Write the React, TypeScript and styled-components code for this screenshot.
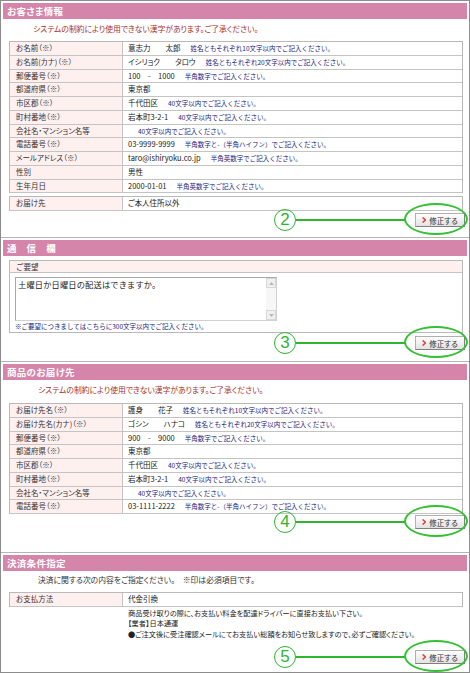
import React from 'react';
import styled, { createGlobalStyle } from 'styled-components';

const GlobalStyle = createGlobalStyle`
  html, body { margin:0; padding:0; background:#fff; }
  body {
    font-family: "Noto Sans CJK JP", "Noto Sans", sans-serif;
    color:#222;
  }
  * { box-sizing: border-box; }
`;

const Frame = styled.div`
  width:470px;
  height:673px;
  border:1px solid #8c8c8c;
  background:#fff;
  overflow:hidden;
`;

const Section = styled.section<{ h: number }>`
  height:${(p) => p.h}px;
  padding:2px 2px 0;
  border-bottom:1px solid #b4b4b4;
  &:last-child { border-bottom:none; }
`;

const Header = styled.div`
  height:16px;
  background:#d585a9;
  color:#fff;
  font-weight:bold;
  font-size:9.5px;
  line-height:16px;
  padding-left:4px;
  font-feature-settings:"palt";
  letter-spacing:0.3px;
`;

const Body = styled.div`
  padding:0 4px 0 6px;
`;

const Notice = styled.div<{ h: number; indent: number; red?: boolean }>`
  height:${(p) => p.h}px;
  line-height:${(p) => p.h - 3}px;
  padding-left:${(p) => p.indent}px;
  font-size:7.8px;
  color:${(p) => (p.red ? '#a8322e' : '#333')};
  font-feature-settings:"palt";
  white-space:nowrap;
`;

const Table = styled.div<{ mt?: number }>`
  border:1px solid #b9b9b9;
  border-bottom:none;
  margin-top:${(p) => p.mt || 0}px;
`;

const Row = styled.div`
  display:grid;
  grid-template-columns:113px 1fr;
  height:13.75px;
  border-bottom:1px solid #c4c4c4;
`;

const Label = styled.div`
  background:#fff0f0;
  border-right:1px solid #c4c4c4;
  padding-left:6px;
  font-size:7.5px;
  line-height:12.75px;
  color:#333;
  white-space:nowrap;
  font-feature-settings:"palt";
`;

const Value = styled.div`
  padding-left:5px;
  font-size:7.5px;
  line-height:12.75px;
  color:#222;
  white-space:nowrap;
  display:flex;
  align-items:center;
  font-feature-settings:"palt";
`;

const Note = styled.span`
  color:#23237d;
  font-size:6.5px;
  margin-left:10px;
  font-feature-settings:normal;
`;

const RequestBox = styled.div`
  margin-top:4px;
  border:1px solid #b9b9b9;
  padding-bottom:1px;
`;

const BoxLabel = styled.div`
  height:12px;
  background:#fff0f0;
  border-bottom:1px solid #c4c4c4;
  padding-left:6px;
  font-size:7.5px;
  line-height:11px;
  color:#333;
`;

const TextArea = styled.div`
  margin:4px 0 0 5px;
  width:262px;
  height:44px;
  border:1px solid #a9a9a9;
  border-right-color:#d0d0d0;
  border-bottom-color:#d0d0d0;
  display:flex;
`;

const TextContent = styled.div`
  flex:1;
  padding:1px 2px;
  font-size:8.2px;
  line-height:11px;
  color:#222;
  letter-spacing:0.2px;
`;

const ScrollBar = styled.div`
  width:10px;
  background:#f7f7f7;
  display:flex;
  flex-direction:column;
  justify-content:space-between;
`;

const ScrollBtn = styled.div`
  height:10px;
  border:1px solid #d8d8d8;
  background:#f0f0f0;
  display:flex;
  align-items:center;
  justify-content:center;
`;

const SmallNote = styled.div`
  padding-left:5px;
  height:10px;
  line-height:10px;
  font-size:6.5px;
  color:#23237d;
`;

const PayLines = styled.div`
  padding:1px 0 0 119px;
  font-size:7.2px;
  line-height:10.5px;
  color:#222;
  white-space:nowrap;
  font-feature-settings:"palt";
`;

const ActionRow = styled.div<{ mt: number }>`
  margin-top:${(p) => p.mt}px;
  height:16px;
  padding-right:2px;
  display:flex;
  justify-content:flex-end;
  align-items:center;
`;

const CircleNum = styled.span`
  width:22px;
  height:22px;
  flex:none;
  border:1.5px solid #2fb52f;
  border-radius:50%;
  color:#2fb52f;
  font-family:"Liberation Sans", Arial, sans-serif;
  font-size:17px;
  line-height:19px;
  text-align:center;
`;

const Connector = styled.span`
  width:109px;
  height:2px;
  background:#2fb52f;
`;

const ButtonWrap = styled.div`
  position:relative;
  margin-left:10px;
`;

const Ellipse = styled.span`
  position:absolute;
  left:-11px;
  right:-3px;
  top:-10px;
  bottom:-8px;
  border:2px solid #33c033;
  border-radius:50%;
  pointer-events:none;
`;

const EditButton = styled.div`
  width:50px;
  height:14px;
  border:1px solid #b0b0b0;
  border-right-color:#808080;
  border-bottom-color:#808080;
  background:linear-gradient(#fefefe, #e2e2e2);
  display:flex;
  align-items:center;
  justify-content:center;
  gap:3px;
  font-size:7.5px;
  color:#333;
  font-feature-settings:"palt";
`;

type Field = { label: string; value?: string; note?: string };

const customer: Field[] = [
  { label: 'お名前（※）', value: '意志力　　太郎', note: '姓名ともそれぞれ10文字以内でご記入ください。' },
  { label: 'お名前(カナ)（※）', value: 'イシリョク　　タロウ', note: '姓名ともそれぞれ20文字以内でご記入ください。' },
  { label: '郵便番号（※）', value: '100　-　1000', note: '半角数字でご記入ください。' },
  { label: '都道府県（※）', value: '東京都' },
  { label: '市区郡（※）', value: '千代田区', note: '40文字以内でご記入ください。' },
  { label: '町村番地（※）', value: '岩本町3-2-1', note: '40文字以内でご記入ください。' },
  { label: '会社名・マンション名等', note: '40文字以内でご記入ください。' },
  { label: '電話番号（※）', value: '03-9999-9999', note: '半角数字と-（半角ハイフン）でご記入ください。' },
  { label: 'メールアドレス（※）', value: 'taro@ishiryoku.co.jp', note: '半角英数字でご記入ください。' },
  { label: '性別', value: '男性' },
  { label: '生年月日', value: '2000-01-01', note: '半角英数字でご記入ください。' },
];

const delivery: Field[] = [
  { label: 'お届け先名（※）', value: '護身　　花子', note: '姓名ともそれぞれ10文字以内でご記入ください。' },
  { label: 'お届け先名(カナ)（※）', value: 'ゴシン　　ハナコ', note: '姓名ともそれぞれ20文字以内でご記入ください。' },
  { label: '郵便番号（※）', value: '900　-　9000', note: '半角数字でご記入ください。' },
  { label: '都道府県（※）', value: '東京都' },
  { label: '市区郡（※）', value: '千代田区', note: '40文字以内でご記入ください。' },
  { label: '町村番地（※）', value: '岩本町3-2-1', note: '40文字以内でご記入ください。' },
  { label: '会社名・マンション名等', note: '40文字以内でご記入ください。' },
  { label: '電話番号（※）', value: '03-1111-2222', note: '半角数字と-（半角ハイフン）でご記入ください。' },
];

function Fields({ rows, mt }: { rows: Field[]; mt?: number }) {
  return (
    <Table mt={mt}>
      {rows.map((r) => (
        <Row key={r.label}>
          <Label>{r.label}</Label>
          <Value>
            {r.value}
            {r.note && <Note>{r.note}</Note>}
          </Value>
        </Row>
      ))}
    </Table>
  );
}

function Action({ num, mt }: { num: string; mt: number }) {
  return (
    <ActionRow mt={mt}>
      <CircleNum>{num}</CircleNum>
      <Connector />
      <ButtonWrap>
        <EditButton>
          <svg width="4" height="6" viewBox="0 0 4 6">
            <path d="M0.6 0.4 L3.4 3 L0.6 5.6" fill="none" stroke="#e0403a" strokeWidth="1.4" />
          </svg>
          修正する
        </EditButton>
        <Ellipse />
      </ButtonWrap>
    </ActionRow>
  );
}

function Arrow({ up }: { up?: boolean }) {
  return (
    <svg width="5" height="3" viewBox="0 0 5 3">
      <path d={up ? 'M0 3 L2.5 0 L5 3 Z' : 'M0 0 L2.5 3 L5 0 Z'} fill="#b8b8b8" />
    </svg>
  );
}

export default function App() {
  return (
    <>
      <GlobalStyle />
      <Frame>
        <Section h={237}>
          <Header>お客さま情報</Header>
          <Body>
            <Notice h={22} indent={24} red>
              システムの制約により使用できない漢字があります。ご了承ください。
            </Notice>
            <Fields rows={customer} />
            <Fields rows={[{ label: 'お届け先', value: 'ご本人住所以外' }]} mt={3} />
          </Body>
          <Action num="2" mt={1} />
        </Section>

        <Section h={124}>
          <Header>通　信　欄</Header>
          <Body>
            <RequestBox>
              <BoxLabel>ご要望</BoxLabel>
              <TextArea>
                <TextContent>土曜日か日曜日の配送はできますか。</TextContent>
                <ScrollBar>
                  <ScrollBtn><Arrow up /></ScrollBtn>
                  <ScrollBtn><Arrow /></ScrollBtn>
                </ScrollBar>
              </TextArea>
              <SmallNote>※ご要望につきましてはこちらに300文字以内でご記入ください。</SmallNote>
            </RequestBox>
          </Body>
          <Action num="3" mt={2} />
        </Section>

        <Section h={191}>
          <Header>商品のお届け先</Header>
          <Body>
            <Notice h={23} indent={29} red>
              システムの制約により使用できない漢字があります。ご了承ください。
            </Notice>
            <Fields rows={delivery} />
          </Body>
          <Action num="4" mt={0} />
        </Section>

        <Section h={119}>
          <Header>決済条件指定</Header>
          <Body>
            <Notice h={21} indent={29}>
              決済に関する次の内容をご指定ください。　※印は必須項目です。
            </Notice>
            <Fields rows={[{ label: 'お支払方法', value: '代金引換' }]} />
            <PayLines>
              <div>商品受け取りの際に、お支払い料金を配達ドライバーに直接お支払い下さい。</div>
              <div>【業者】日本通運</div>
              <div>●ご注文後に受注確認メールにてお支払い総額をお知らせ致しますので、必ずご確認ください。</div>
            </PayLines>
          </Body>
          <Action num="5" mt={10} />
        </Section>
      </Frame>
    </>
  );
}
